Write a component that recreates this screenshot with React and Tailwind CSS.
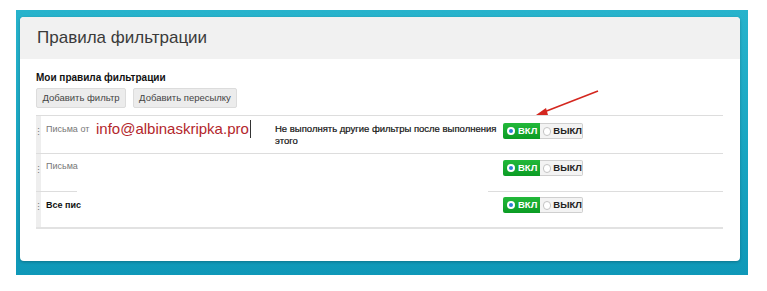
import React from "react";

const Handle = () => (
  <div className="w-[5px] self-stretch bg-[#eeeeee] flex items-center justify-center">
    <span className="text-[9px] leading-none text-[#777] -translate-y-[2px]">⋮</span>
  </div>
);

const Toggle = () => (
  <div className="flex h-[16px] text-[9.5px] font-bold leading-none">
    <div className="flex items-center gap-[3px] w-[37px] pl-[4px] rounded-l-[2px] bg-gradient-to-b from-[#22b83a] to-[#0a9c24] text-white">
      <span className="w-[8px] h-[8px] rounded-full bg-white flex items-center justify-center">
        <span className="w-[4px] h-[4px] rounded-full bg-[#2a7fd6]" />
      </span>
      <span>ВКЛ</span>
    </div>
    <div className="flex items-center gap-[2px] w-[43px] pl-[3px] rounded-r-[2px] border border-l-0 border-[#cfcfcf] bg-[#f3f3f3] text-[#222]">
      <span className="w-[9px] h-[9px] rounded-full bg-white border border-[#c4c4c4]" />
      <span>ВЫКЛ</span>
    </div>
  </div>
);

export default function App() {
  return (
    <div className="relative w-[767px] h-[291px] bg-white overflow-hidden" style={{ fontFamily: '"Liberation Sans", Arial, sans-serif' }}>
      <div className="ml-[16px] mt-[10px] w-[732px] h-[265px] bg-gradient-to-b from-[#27b3cc] via-[#19a6c2] to-[#0f98b8] pl-[4px] pr-[8px] pt-[7px] pb-[14px]">
        <div className="h-full bg-white rounded-[4px] overflow-hidden shadow-[0_1px_3px_rgba(0,0,0,0.25)]">
          {/* Header */}
          <div className="h-[42px] bg-[#f1f1f1] flex items-center pl-[17px] text-[17px] text-[#3a3a3a]">
            Правила фильтрации
          </div>

          {/* Body */}
          <div className="pl-[16px] pr-[17px] pt-[12px]">
            <div className="text-[10px] font-bold text-[#111] leading-[14px]">Мои правила фильтрации</div>
            <div className="flex gap-[7px] mt-[3px]">
              <button className="h-[20px] w-[90px] bg-[#ececec] border border-[#dcdcdc] rounded-[2px] text-[9.5px] text-[#444]">
                Добавить фильтр
              </button>
              <button className="h-[20px] w-[104px] bg-[#ececec] border border-[#dcdcdc] rounded-[2px] text-[9.5px] text-[#444]">
                Добавить пересылку
              </button>
            </div>

            <div className="mt-[7px] w-[687px]">
              {/* Row 1 */}
              <div className="flex h-[38px] border-t border-[#dddddd]">
                <Handle />
                <div className="w-[55px] pl-[5px] pt-[7px] text-[9px] text-[#777] whitespace-nowrap">Письма от</div>
                <div className="w-[179px] flex items-start pt-[3px]">
                  <span className="text-[15px] text-[#b3262b] leading-[20px] whitespace-nowrap">info@albinaskripka.pro</span>
                  <span className="w-[1px] h-[18px] bg-[#333] ml-[1px] mt-[1px]" />
                </div>
                <div className="w-[228px] pr-[4px] pt-[7px] text-[9.5px] leading-[12px] text-[#111] [-webkit-text-stroke:0.2px_#111]">
                  Не выполнять другие фильтры после выполнения этого
                </div>
                <div className="pt-[7px]">
                  <Toggle />
                </div>
              </div>

              {/* Row 2 */}
              <div className="flex h-[38px] border-t border-[#dddddd]">
                <Handle />
                <div className="w-[462px] pl-[5px] pt-[6px] text-[9px] text-[#777]">Письма</div>
                <div className="pt-[6px]">
                  <Toggle />
                </div>
              </div>

              {/* partial separator */}
              <div className="flex h-[1px]">
                <div className="w-[41px] bg-[#dddddd]" />
                <div className="w-[411px]" />
                <div className="flex-1 bg-[#dddddd]" />
              </div>

              {/* Row 3 */}
              <div className="flex h-[37px] border-b-2 border-[#e2e2e2]">
                <Handle />
                <div className="w-[462px] pl-[5px] pt-[7px] text-[9px] font-semibold text-[#111]">Все пис</div>
                <div className="pt-[5px]">
                  <Toggle />
                </div>
              </div>
            </div>
          </div>
        </div>
      </div>

      {/* Annotation arrow */}
      <svg className="absolute left-0 top-0 pointer-events-none" width="767" height="291">
        <line x1="598" y1="91" x2="544" y2="112" stroke="#d4271f" strokeWidth="1.6" />
        <polygon points="536,115 546,108 548,115" fill="#d4271f" />
      </svg>
    </div>
  );
}
